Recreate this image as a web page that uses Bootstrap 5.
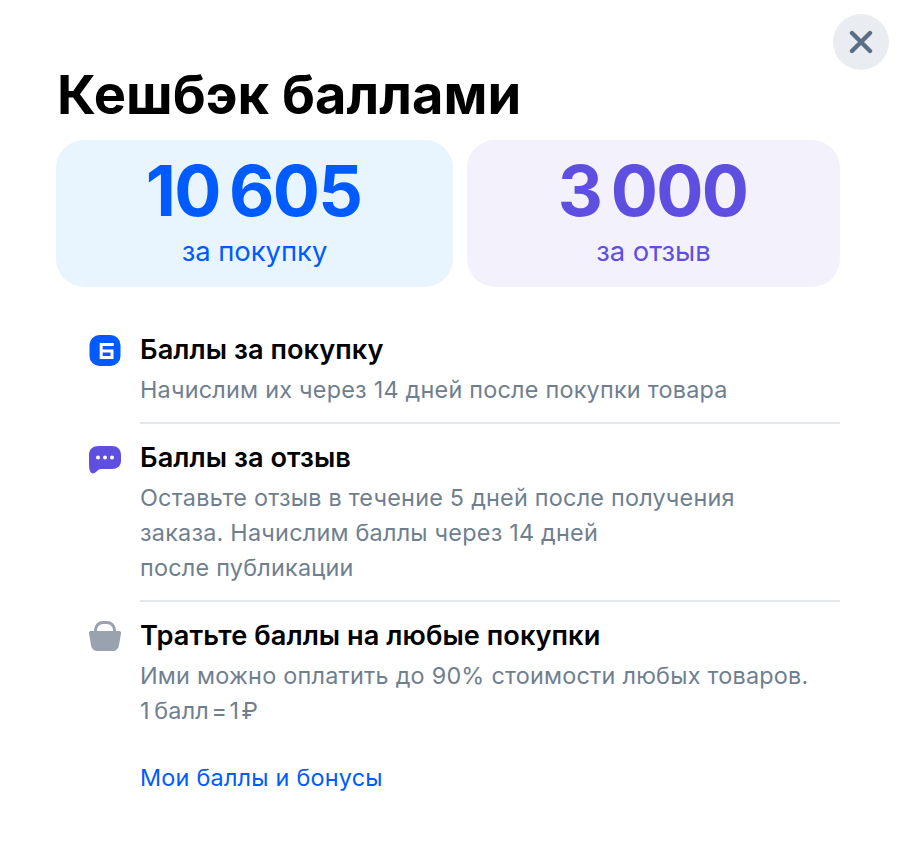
<!DOCTYPE html>
<html lang="ru">
<head>
  <meta charset="UTF-8">
  <title>Кешбэк баллами</title>
  <link href="https://cdn.jsdelivr.net/npm/bootstrap@5.3.0/dist/css/bootstrap.min.css" rel="stylesheet">
  <style>
    body { font-family: Inter, "Noto Sans", sans-serif; background: #fff; color: #000; }
    .sheet { width: 902px; height: 851px; padding: 59px 62px 0 56px; position: relative; }
    .close-round { position: absolute; top: 14px; right: 13px; width: 56px; height: 56px; border: 0; border-radius: 50%; background: #e9edf2; padding: 0; }
    .sheet-title { font-size: 54.2px; line-height: 70px; font-weight: 700; margin: 0 0 11px 1px; }
    .sum-box { height: 147px; border-radius: 28px; text-align: center; padding-top: 12px; }
    .sum-a { width: 397px; background: #e8f5fe; color: #005bff; }
    .sum-b { width: 373px; background: #f2f1fc; color: #5f4fe0; }
    .sum-num { font-size: 70px; line-height: 78px; font-weight: 700; letter-spacing: -1.7px; padding-right: 2px; }
    .sum-cap { font-size: 27.4px; line-height: 34px; margin-top: 4px; }
    .perk-list { margin-top: 41px; padding-left: 33px; }
    .perk-icon { width: 32px; flex: none; margin-right: 19px; padding-top: 7px; }
    .perk-body { flex: 1; }
    .perk-row { display: flex; }
    .perk-gap { margin-top: 12px; }
    .perk-name { font-size: 27.2px; line-height: 43.5px; font-weight: 600; letter-spacing: 0.05px; }
    .perk-text { font-size: 23.4px; line-height: 35px; color: #6f7f8f; letter-spacing: 0.23px; }
    .perk-split { border-bottom: 2px solid #e3e7ea; padding-bottom: 15.5px; }
    .perk-link { display: block; margin: 32px 0 0 51px; font-size: 23.4px; line-height: 35px; color: #005bff; text-decoration: none; letter-spacing: 0.23px; }
  </style>
</head>
<body class="m-0">
<div class="sheet">
  <button type="button" class="close-round d-flex align-items-center justify-content-center" aria-label="Закрыть">
    <svg width="24" height="24" viewBox="0 0 24 24"><path d="M3 3 L21 21 M21 3 L3 21" stroke="#5a6f85" stroke-width="4.4" stroke-linecap="round" fill="none"/></svg>
  </button>
  <h1 class="sheet-title">Кешбэк баллами</h1>
  <div class="d-flex" style="gap:14px">
    <div class="sum-box sum-a">
      <div class="sum-num">10&#8201;605</div>
      <div class="sum-cap">за покупку</div>
    </div>
    <div class="sum-box sum-b">
      <div class="sum-num">3&#8201;000</div>
      <div class="sum-cap">за отзыв</div>
    </div>
  </div>

  <div class="perk-list">
    <div class="perk-row">
      <div class="perk-icon">
        <svg width="32" height="32" viewBox="0 0 32 32"><rect x=".5" width="31" height="31" rx="10" fill="#005bff"/><path d="M24.7 9.5H12.2V22.5H23V16H12.2" stroke="#fff" stroke-width="3" fill="none"/></svg>
      </div>
      <div class="perk-body perk-split">
        <div class="perk-name">Баллы за покупку</div>
        <div class="perk-text">Начислим их через 14 дней после покупки товара</div>
      </div>
    </div>
    <div class="perk-row perk-gap">
      <div class="perk-icon">
        <svg width="32" height="32" viewBox="0 0 32 32"><path d="M10 3H23C28 3 32 6 32 12V18C32 23 28 26 23 26H12C10 26 9 27 7 29C5 31 2 31 1 28C0 26 0 23 0 19V12C0 6 4 3 10 3Z" fill="#5f4fe0"/><circle cx="9" cy="14.5" r="2" fill="#fff"/><circle cx="16" cy="14.5" r="2" fill="#fff"/><circle cx="23" cy="14.5" r="2" fill="#fff"/></svg>
      </div>
      <div class="perk-body perk-split">
        <div class="perk-name">Баллы за отзыв</div>
        <div class="perk-text">Оставьте отзыв в течение 5 дней после получения<br>заказа. Начислим баллы через 14 дней<br>после публикации</div>
      </div>
    </div>
    <div class="perk-row perk-gap">
      <div class="perk-icon">
        <svg width="32" height="32" viewBox="0 0 32 32"><path d="M6.5 12V9C6.5 4.5 10 1.5 14 1.5H18C22 1.5 25.5 4.5 25.5 9V12" stroke="#98a3af" stroke-width="3" fill="none"/><path d="M2 10H30C31.5 10 32.2 11 32 12.5L30 24C29.3 28 27 30 23 30H9C5 30 2.7 28 2 24L0 12.5C-.2 11 .5 10 2 10Z" fill="#98a3af"/></svg>
      </div>
      <div class="perk-body">
        <div class="perk-name">Тратьте баллы на любые покупки</div>
        <div class="perk-text">Ими можно оплатить до 90% стоимости любых товаров.<br>1&#8201;балл&#8202;=&#8202;1&#8202;₽</div>
      </div>
    </div>
    <a href="#" class="perk-link">Мои баллы и бонусы</a>
  </div>
</div>
<script src="https://cdn.jsdelivr.net/npm/bootstrap@5.3.0/dist/js/bootstrap.bundle.min.js"></script>
</body>
</html>
